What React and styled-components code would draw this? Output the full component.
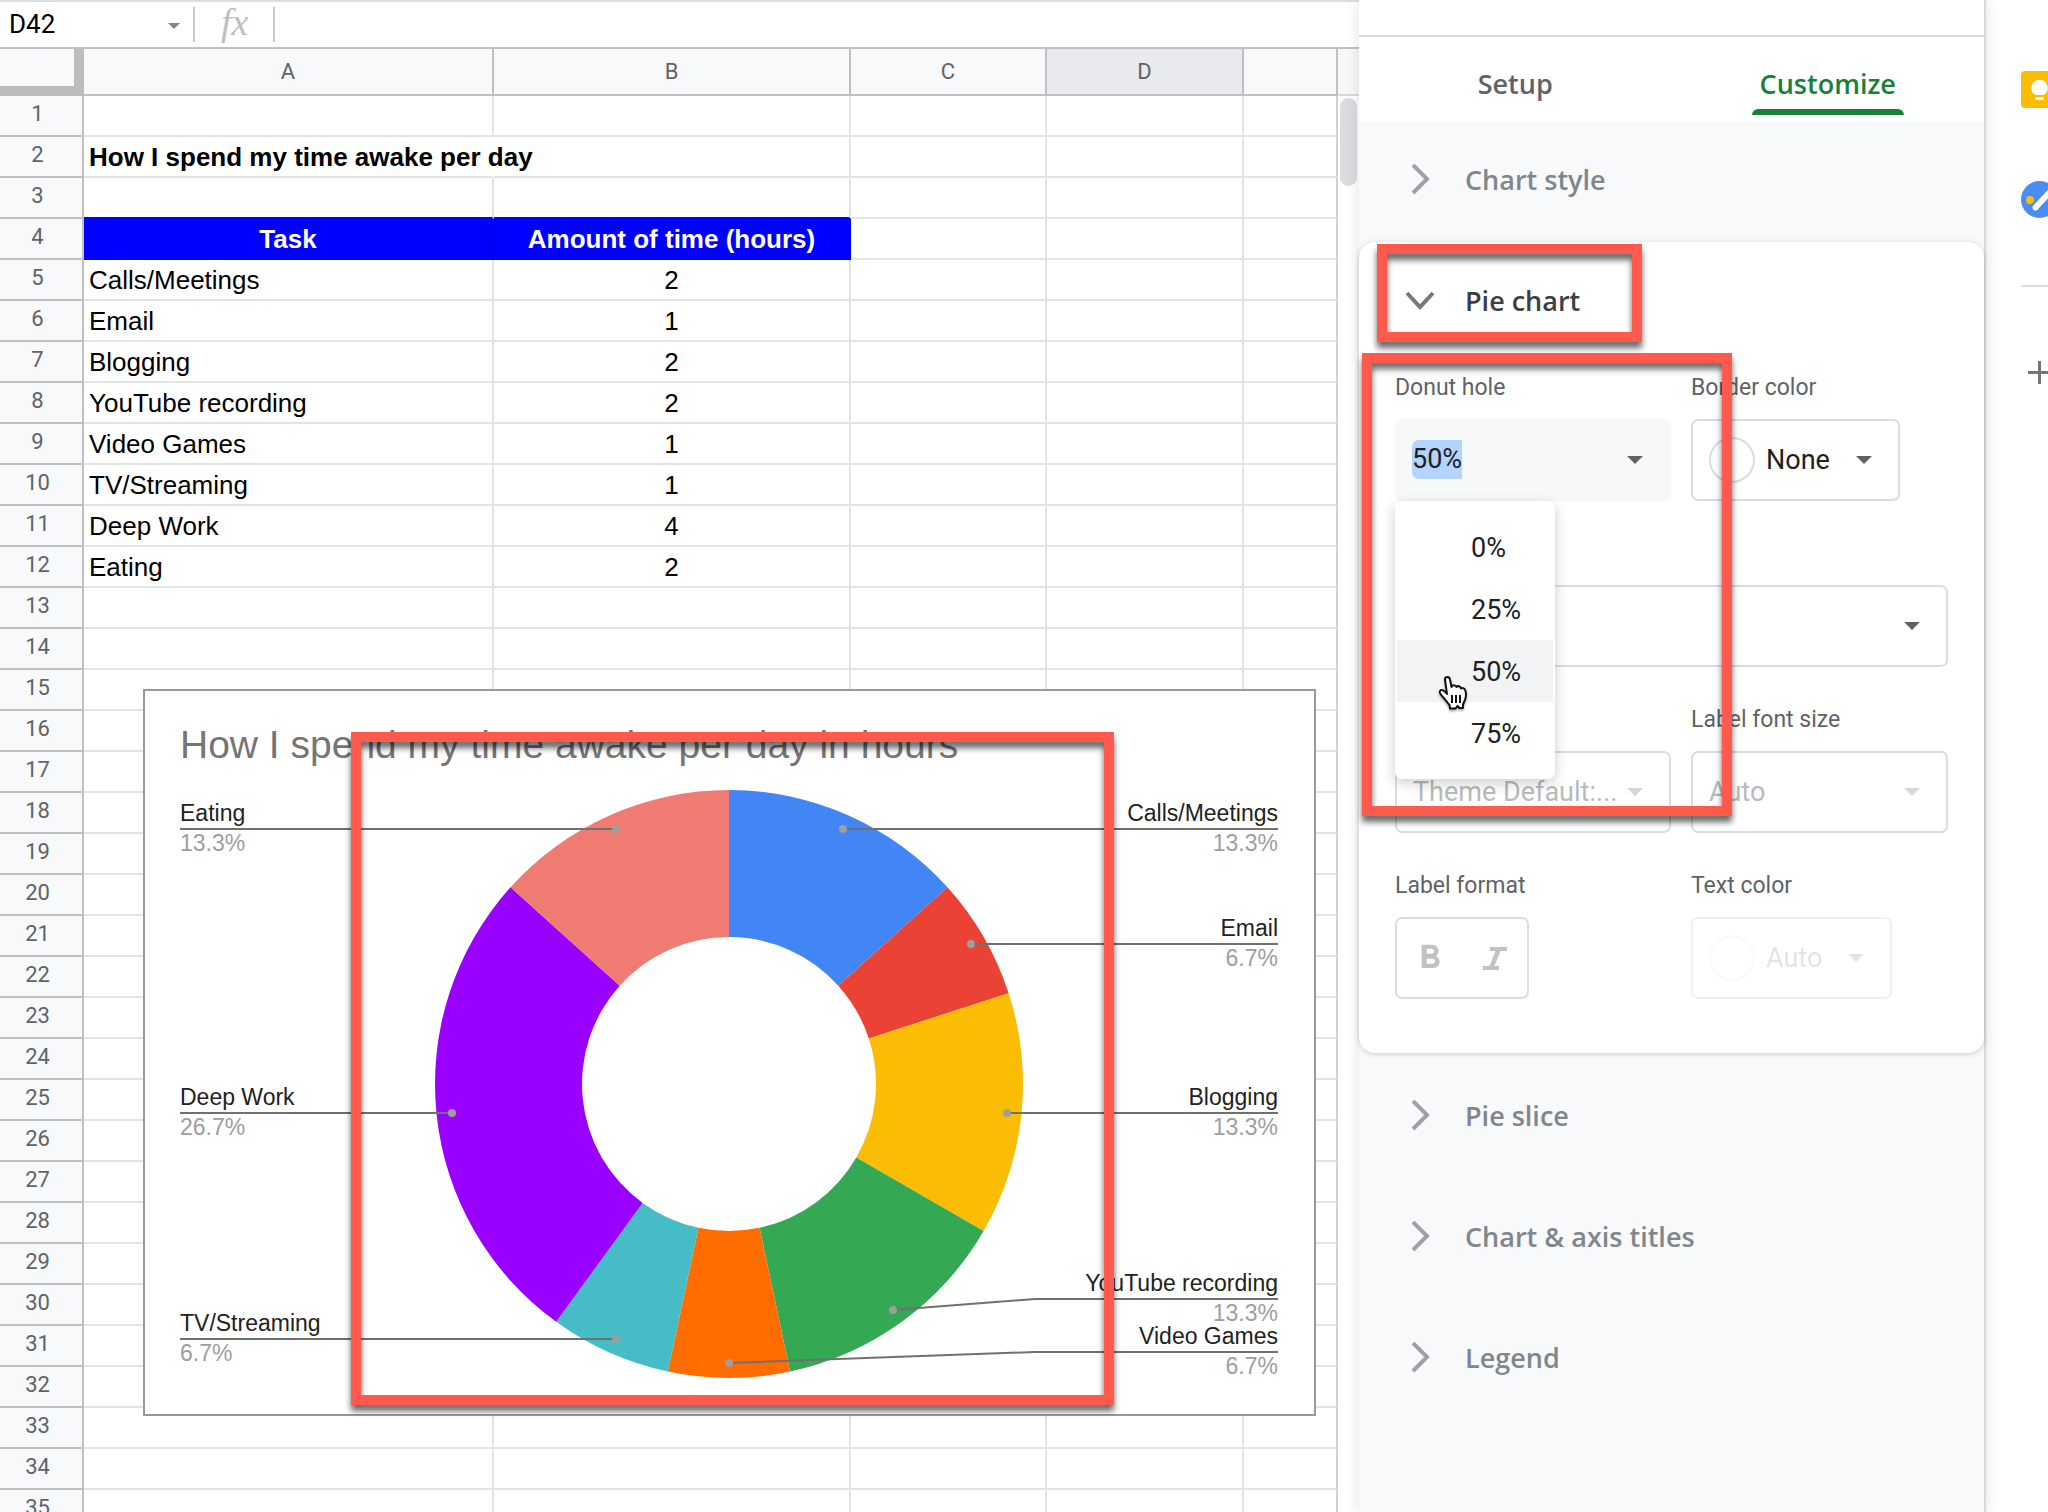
import { useState } from "react";
import styled, { createGlobalStyle } from "styled-components";
import { MdFormatBold } from "react-icons/md";

const tasks = [
    { name: "Calls/Meetings", hours: 2 },
    { name: "Email", hours: 1 },
    { name: "Blogging", hours: 2 },
    { name: "YouTube recording", hours: 2 },
    { name: "Video Games", hours: 1 },
    { name: "TV/Streaming", hours: 1 },
    { name: "Deep Work", hours: 4 },
    { name: "Eating", hours: 2 },
];

// clockwise from the top of the donut
const slices = [
    { value: 2, color: "#4285f4" },
    { value: 1, color: "#ea4335" },
    { value: 2, color: "#fbbc04" },
    { value: 2, color: "#34a853" },
    { value: 1, color: "#ff6d01" },
    { value: 1, color: "#46bdc6" },
    { value: 4, color: "#9900ff" },
    { value: 2, color: "#f07b72" },
];

const callouts = [
    { name: "Calls/Meetings", percent: "13.3%", side: "right", y: 138, dot: [698, 138] },
    { name: "Email", percent: "6.7%", side: "right", y: 253, dot: [826, 253] },
    { name: "Blogging", percent: "13.3%", side: "right", y: 422, dot: [862, 422] },
    { name: "YouTube recording", percent: "13.3%", side: "right", y: 608, dot: [748, 619] },
    { name: "Video Games", percent: "6.7%", side: "right", y: 661, dot: [584, 672] },
    { name: "TV/Streaming", percent: "6.7%", side: "left", y: 648, dot: [471, 648] },
    { name: "Deep Work", percent: "26.7%", side: "left", y: 422, dot: [307, 422] },
    { name: "Eating", percent: "13.3%", side: "left", y: 138, dot: [471, 138] },
];

const CX = 584;
const CY = 393;
const R = 294;
const HOLE = 147;

function slicePath(start, end){
    const point = (radius, turn) => {
        const a = turn * 2 * Math.PI;
        return `${CX + radius * Math.sin(a)} ${CY - radius * Math.cos(a)}`;
    };
    return `M${point(R, start)} A${R} ${R} 0 0 1 ${point(R, end)} L${point(HOLE, end)} A${HOLE} ${HOLE} 0 0 0 ${point(HOLE, start)} Z`;
}

function Donut(){
    const total = slices.reduce((sum, s) => sum + s.value, 0);
    let turn = 0;
    return(
        <svg width="1169" height="723" viewBox="0 0 1169 723">
            <ChartTitle x="35" y="67">How I spend my time awake per day in hours</ChartTitle>
            {slices.map((s) => {
                const start = turn;
                turn += s.value / total;
                return <path key={s.color} d={slicePath(start, turn)} fill={s.color} />;
            })}
            {callouts.map((c) => {
                const edge = c.side === "left" ? 35 : 1133;
                const anchor = c.side === "left" ? "start" : "end";
                return(
                    <g key={c.name}>
                        <path d={`M${edge} ${c.y} H${c.y === c.dot[1] ? c.dot[0] : 890} L${c.dot[0]} ${c.dot[1]}`} fill="none" stroke="#707070" strokeWidth="2" />
                        <circle cx={c.dot[0]} cy={c.dot[1]} r="4" fill="#9e9e9e" />
                        <CalloutText x={edge} y={c.y - 8} textAnchor={anchor}>{c.name}</CalloutText>
                        <CalloutText $muted x={edge} y={c.y + 22} textAnchor={anchor}>{c.percent}</CalloutText>
                    </g>
                );
            })}
        </svg>
    );
}

function SheetRow({n}){
    const task = tasks[n - 5];
    return(
        <tr>
            <RowHead scope="row">{n}</RowHead>
            {n === 2 ? <Cell $bold $open>How I spend my time awake per day</Cell>
                : n === 4 ? <Cell $header>Task</Cell>
                : <Cell $blueLine={n === 3}>{task?.name}</Cell>}
            {n === 4 ? <Cell $header>Amount of time (hours)</Cell>
                : <Cell $center $blueLine={n === 3}>{task?.hours}</Cell>}
            <Cell /><Cell /><Cell $last />
        </tr>
    );
}

function Chevron({open}){
    return(
        <svg width="32" height="32" viewBox="0 0 32 32" fill="none" stroke={open ? "#757779" : "#9fa1a4"} strokeWidth="4">
            <path d={open ? "M3 8 L16 22 L29 8" : "M9 1 L23 15 L9 29"} />
        </svg>
    );
}

function Section({title, open}){
    return(
        <SectionButton $open={open} aria-expanded={!!open}>
            <Chevron open={open} />
            {title}
        </SectionButton>
    );
}

function SelectField({id, label, value, disabled}){
    return(
        <Field>
            <label htmlFor={id}>{label}</label>
            <SelectBox $disabled={disabled}>
                <select id={id} disabled={disabled} defaultValue={value}>
                    <option>{value}</option>
                </select>
            </SelectBox>
        </Field>
    );
}

function ColorField({id, label, value, disabled}){
    return(
        <Field>
            <label htmlFor={id}>{label}</label>
            <ColorButton id={id} disabled={disabled}>
                <Swatch $faint={disabled} />
                {value}
                <Arrow $gap />
            </ColorButton>
        </Field>
    );
}

function DonutHoleField(){
    const [hole, setHole] = useState("50%");
    return(
        <Field>
            <label htmlFor="hole">Donut hole</label>
            <HoleButton id="hole" aria-haspopup="listbox" aria-expanded="true">
                <mark>{hole}</mark>
                <Arrow />
            </HoleButton>
            <Menu role="listbox">
                {["0%", "25%", "50%", "75%"].map((option) =>
                    <MenuItem
                        key={option}
                        role="option"
                        aria-selected={option === hole}
                        $active={option === hole}
                        onClick={() => setHole(option)}
                    >{option}</MenuItem>
                )}
                <HandCursor />
            </Menu>
        </Field>
    );
}

function HandCursor(){
    return(
        <Pointer width="32" height="36" viewBox="0 0 32 36">
            <path
                d="M8 4.5 C8 1 12.5 1 13 4.5 L14.5 12 C15 9.500 18.500 9.500 19.500 12 C20.500 10.500 23.500 11 24 13.500 C25.500 12.500 28 13.500 28.500 16 C29.500 20 29 23 27.500 26 L26 29.500 L26 33 L22.500 33 L20.500 31 L18.500 33.500 L13 33.500 L12.500 30 C10 27.500 8.500 24.500 6 22 C4 20 2 17.500 3 16 C4.500 14 7.500 15.500 10 19 Z"
                fill="#fff" stroke="#111" strokeWidth="2" strokeLinejoin="round"
            />
            <path d="M15 20v8M19 20v8M23 20v8" stroke="#111" strokeWidth="2" />
        </Pointer>
    );
}

export default function App(){
    return(
        <Page>
            <GlobalStyle />
            <SheetArea>
                <FormulaBar>
                    <NameBox>D42<SmallArrow /></NameBox>
                    <Fx>fx</Fx>
                </FormulaBar>
                <GridArea>
                    <SheetWrap>
                        <Sheet>
                            <colgroup>
                                <col width="84" /><col width="410" /><col width="357" />
                                <col width="196" /><col width="197" /><col />
                            </colgroup>
                            <thead>
                                <tr>
                                    <Corner />
                                    <ColHead>A</ColHead>
                                    <ColHead>B</ColHead>
                                    <ColHead>C</ColHead>
                                    <ColHead $selected>D</ColHead>
                                    <ColHead />
                                </tr>
                            </thead>
                            <tbody>
                                {Array.from({ length: 35 }, (_, i) => <SheetRow key={i} n={i + 1} />)}
                            </tbody>
                        </Sheet>
                    </SheetWrap>
                    <ScrollTrack><div /><span /></ScrollTrack>
                    <ChartFrame>
                        <Donut />
                        <ChartHighlight />
                    </ChartFrame>
                </GridArea>
            </SheetArea>
            <Panel>
                <PanelTop />
                <Tabs>
                    <Tab><span>Setup</span></Tab>
                    <Tab $active><span>Customize</span></Tab>
                </Tabs>
                <Section title="Chart style" />
                <Card>
                    <Section title="Pie chart" open />
                    <Fields>
                        <DonutHoleField />
                        <ColorField id="border" label="Border color" value="None" />
                        <Wide><SelectField id="slice" label="Slice label" value="" /></Wide>
                        <SelectField id="font" label="Label font" value="Theme Default:..." disabled />
                        <SelectField id="size" label="Label font size" value="Auto" disabled />
                        <Field>
                            <span>Label format</span>
                            <FormatGroup role="group">
                                <button aria-label="Bold"><MdFormatBold size={40} /></button>
                                <button aria-label="Italic">
                                    <svg width="24" height="23" viewBox="0 0 24 23" fill="currentColor">
                                        <path d="M7 0h17v4h-6.500l-6 15h4.500v4H0v-4h6.500l6-15H7z" />
                                    </svg>
                                </button>
                            </FormatGroup>
                        </Field>
                        <ColorField id="text" label="Text color" value="Auto" disabled />
                    </Fields>
                    <HeadingHighlight />
                    <FieldHighlight />
                </Card>
                <Section title="Pie slice" />
                <Section title="Chart & axis titles" />
                <Section title="Legend" />
            </Panel>
            <Rail>
                <svg width="37" height="37" viewBox="0 0 37 37">
                    <rect width="37" height="37" rx="4" fill="#fbbc04" />
                    <path d="M18.500 9a8 8 0 0 0-4 15h8a8 8 0 0 0-4-15z" fill="#fff" />
                    <rect x="14.500" y="26" width="8" height="3" fill="#fff" />
                </svg>
                <svg width="37" height="37" viewBox="0 0 37 37">
                    <circle cx="18.500" cy="18.500" r="18.500" fill="#4b8bf5" />
                    <path d="M14.500 26.500 L30 10" stroke="#fff" strokeWidth="6" strokeLinecap="round" />
                    <circle cx="9" cy="19" r="4" fill="#fbbc04" />
                </svg>
                <hr />
                <svg width="37" height="37" viewBox="0 0 37 37" stroke="#757575" strokeWidth="3">
                    <path d="M18.500 7v23M7 18.500h23" />
                </svg>
            </Rail>
        </Page>
    );
}

const GlobalStyle = createGlobalStyle`
    *{
        box-sizing: border-box;
    }
    body{
        margin: 0;
        font-family: Roboto, sans-serif;
        background-color: #fff;
    }
    button, select{
        font: inherit;
        color: inherit;
        background: none;
        border: none;
        padding: 0;
        margin: 0;
    }
`;

const Page = styled.div`
    display: flex;
    height: 100vh;
    overflow: hidden;
`;

const SheetArea = styled.main`
    flex: 1;
    min-width: 0;
`;

const FormulaBar = styled.div`
    display: flex;
    align-items: center;
    height: 49px;
    border-top: 2px solid #dadce0;
    border-bottom: 2px solid #c0c0c0;
`;

const NameBox = styled.div`
    display: flex;
    align-items: center;
    justify-content: space-between;
    width: 195px;
    height: 35px;
    padding: 0 13px 2px 9px;
    border-right: 2px solid #c9cbcd;
    font-size: 26px;
`;

const SmallArrow = styled.i`
    border: 6px solid transparent;
    border-top-color: #80868b;
    border-bottom: none;
    margin-top: 4px;
`;

const Fx = styled.div`
    width: 80px;
    height: 35px;
    padding-left: 26px;
    border-right: 2px solid #c9cbcd;
    font: italic 38px/30px "Liberation Serif", serif;
    color: #bdbfc1;
`;

const GridArea = styled.div`
    position: relative;
    display: flex;
`;

const SheetWrap = styled.div`
    flex: 1;
    min-width: 0;
`;

const Sheet = styled.table`
    width: 100%;
    table-layout: fixed;
    border-spacing: 0;
    td, th{
        padding: 0;
    }
`;

const ColHead = styled.th`
    height: 47px;
    background-color: ${(p) => p.$selected ? "#e8eaed" : "#f8f9fa"};
    border-right: 2px solid #c0c0c0;
    border-bottom: 2px solid #c0c0c0;
    font-size: 22px;
    font-weight: 400;
    color: #5f6368;
`;

const Corner = styled.td`
    background-color: #f8f9fa;
    border-right: 10px solid #bcbcbc;
    border-bottom: 10px solid #bcbcbc;
`;

const RowHead = styled.th`
    height: 41px;
    background-color: #f8f9fa;
    border-right: 2px solid #c0c0c0;
    border-bottom: 2px solid #c0c0c0;
    font-size: 22px;
    font-weight: 400;
    line-height: 24px;
    color: #5f6368;
    && {
        padding: 0 7px 4px 0;
    }
`;

const Cell = styled.td`
    height: 41px;
    border-right: 2px solid ${(p) => p.$header ? "#0000f0" : p.$open ? "transparent" : p.$last ? "#d0d0d0" : "#e2e3e3"};
    border-bottom: 2px solid ${(p) => p.$header || p.$blueLine ? "#0000ff" : "#e2e3e3"};
    background-color: ${(p) => p.$header ? "#0000ff" : "transparent"};
    color: ${(p) => p.$header ? "#fff" : "#000"};
    font-family: "Liberation Sans", Arial, sans-serif;
    font-size: 26px;
    line-height: 30px;
    font-weight: ${(p) => p.$header || p.$bold ? 700 : 400};
    text-align: ${(p) => p.$header || p.$center ? "center" : "left"};
    white-space: nowrap;
    && {
        padding-left: ${(p) => p.$header || p.$center ? 0 : 5}px;
    }
`;

const ScrollTrack = styled.div`
    width: 21px;
    div{
        height: 47px;
        background-color: #f8f8f8;
        border-bottom: 2px solid #d9d9d9;
    }
    span{
        display: block;
        width: 17px;
        height: 88px;
        margin: 2px;
        border-radius: 9px;
        background-color: #dadce0;
    }
`;

const ChartFrame = styled.div`
    position: absolute;
    left: 143px;
    top: 640px;
    border: 2px solid #999;
    background-color: #fff;
    svg{
        display: block;
    }
`;

const ChartTitle = styled.text`
    font-family: "Liberation Sans", Arial, sans-serif;
    font-size: 39px;
    fill: #757575;
`;

const CalloutText = styled.text`
    font-family: "Liberation Sans", Arial, sans-serif;
    font-size: 23px;
    fill: ${(p) => p.$muted ? "#9e9e9e" : "#222"};
`;

const Highlight = styled.div`
    position: absolute;
    border: 10px solid #ff5a4c;
    filter: drop-shadow(0 6px 3px rgba(0, 0, 0, 0.6));
    pointer-events: none;
`;

const ChartHighlight = styled(Highlight)`
    left: 206px;
    top: 41px;
    width: 763px;
    height: 673px;
`;

const HeadingHighlight = styled(Highlight)`
    left: 18px;
    top: 2px;
    width: 265px;
    height: 98px;
`;

const FieldHighlight = styled(Highlight)`
    z-index: 2;
    left: 3px;
    top: 111px;
    width: 370px;
    height: 463px;
`;

const Panel = styled.aside`
    position: relative;
    width: 627px;
    background-color: #f8f9fb;
    border-right: 2px solid #d8d8de;
    box-shadow: 0 0 14px rgba(0, 0, 0, 0.12);
`;

const PanelTop = styled.div`
    height: 37px;
    background-color: #fff;
    border-bottom: 2px solid #dadce0;
`;

const Tabs = styled.div`
    display: grid;
    grid-template-columns: 1fr 1fr;
    height: 84px;
    background-color: #fff;
`;

const Tab = styled.button`
    display: flex;
    align-items: flex-end;
    justify-content: center;
    padding-bottom: 6px;
    font-family: "Open Sans", sans-serif;
    font-size: 27px;
    font-weight: 600;
    line-height: 32px;
    color: ${(p) => p.$active ? "#188038" : "#5f6368"};
    span{
        padding: 0 8px;
    }
    span::after{
        content: "";
        display: block;
        height: 6px;
        margin: 9px -8px 0;
        border-radius: 6px 6px 0 0;
        background-color: ${(p) => p.$active ? "#188038" : "transparent"};
    }
`;

const SectionButton = styled.button`
    display: flex;
    align-items: center;
    gap: 29px;
    width: 100%;
    height: 121px;
    padding: 0 45px 4px;
    font-family: "Open Sans", sans-serif;
    font-size: 27px;
    font-weight: 600;
    color: ${(p) => p.$open ? "#3c4043" : "#80868b"};
`;

const Card = styled.section`
    position: relative;
    margin-bottom: 4px;
    padding-bottom: 54px;
    border-radius: 16px;
    background-color: #fff;
    box-shadow: 0 1px 5px rgba(60, 64, 67, 0.25);
`;

const Fields = styled.div`
    display: grid;
    grid-template-columns: 276fr 257fr;
    column-gap: 20px;
    row-gap: 41px;
    padding: 13px 36px 0;
`;

const Wide = styled.div`
    grid-column: span 2;
`;

const Field = styled.div`
    position: relative;
    label, > span{
        display: block;
        margin-bottom: 19px;
        font-size: 23px;
        line-height: 24px;
        color: #5f6368;
    }
`;

const Arrow = styled.i`
    border: 8px solid transparent;
    border-top-color: #5f6368;
    border-bottom: none;
    margin-left: ${(p) => p.$gap ? 15 : 0}px;
`;

const SelectBox = styled.div`
    display: flex;
    align-items: center;
    height: 82px;
    border: 2px solid #dadce0;
    border-radius: 7px;
    padding-right: 26px;
    select{
        flex: 1;
        height: 78px;
        min-width: 0;
        padding-left: 16px;
        appearance: none;
        outline: none;
        font-size: 27px;
        opacity: 1;
        color: ${(p) => p.$disabled ? "#b8babd" : "#202124"};
    }
    &::after{
        content: "";
        border: 8px solid transparent;
        border-top-color: ${(p) => p.$disabled ? "#d4d6d8" : "#5f6368"};
        border-bottom: none;
    }
`;

const HoleButton = styled.button`
    display: flex;
    align-items: center;
    justify-content: space-between;
    width: 100%;
    height: 82px;
    padding: 0 28px 0 17px;
    border-radius: 7px;
    background-color: #f6f9f8;
    font-size: 27px;
    mark{
        line-height: 39px;
        margin-bottom: 2px;
        border-radius: 7px 0 0 7px;
        background-color: #b3d4fc;
        color: #202124;
    }
`;

const ColorButton = styled.button`
    display: flex;
    align-items: center;
    gap: 11px;
    height: 82px;
    padding: 0 26px 0 16px;
    border: 2px solid #dadce0;
    border-radius: 7px;
    font-size: 27px;
    color: #202124;
    &:disabled{
        opacity: 0.4;
        color: #b8babd;
        i{
            border-top-color: #b8babd;
        }
    }
`;

const Swatch = styled.span`
    width: 46px;
    height: 46px;
    border: 2px solid ${(p) => p.$faint ? "#f0f1f2" : "#dadce0"};
    border-radius: 50%;
`;

const FormatGroup = styled.div`
    display: grid;
    grid-template-columns: 1fr 1fr;
    width: 134px;
    height: 82px;
    border: 2px solid #dadce0;
    border-radius: 7px;
    color: #c0c2c4;
    button{
        display: flex;
        align-items: center;
        justify-content: center;
    }
`;

const Menu = styled.div`
    position: absolute;
    z-index: 1;
    top: 100%;
    left: 0;
    width: 160px;
    padding: 15px 2px;
    border-radius: 7px;
    background-color: #fff;
    box-shadow: 0 4px 14px rgba(0, 0, 0, 0.2);
`;

const MenuItem = styled.button`
    display: block;
    width: 100%;
    height: 62px;
    padding: 2px 0 0 74px;
    text-align: left;
    font-size: 27px;
    color: #202124;
    background-color: ${(p) => p.$active ? "#f1f3f4" : "transparent"};
`;

const Pointer = styled.svg`
    position: absolute;
    left: 42px;
    top: 174px;
    filter: drop-shadow(0 2px 1px rgba(0, 0, 0, 0.3));
`;

const Rail = styled.nav`
    display: flex;
    flex-direction: column;
    width: 62px;
    padding: 71px 0 0 35px;
    overflow: hidden;
    svg{
        flex: none;
    }
    svg + svg{
        margin-top: 73px;
    }
    hr{
        width: 40px;
        margin: 67px 0;
        border: none;
        border-top: 2px solid #dadce0;
    }
`;
